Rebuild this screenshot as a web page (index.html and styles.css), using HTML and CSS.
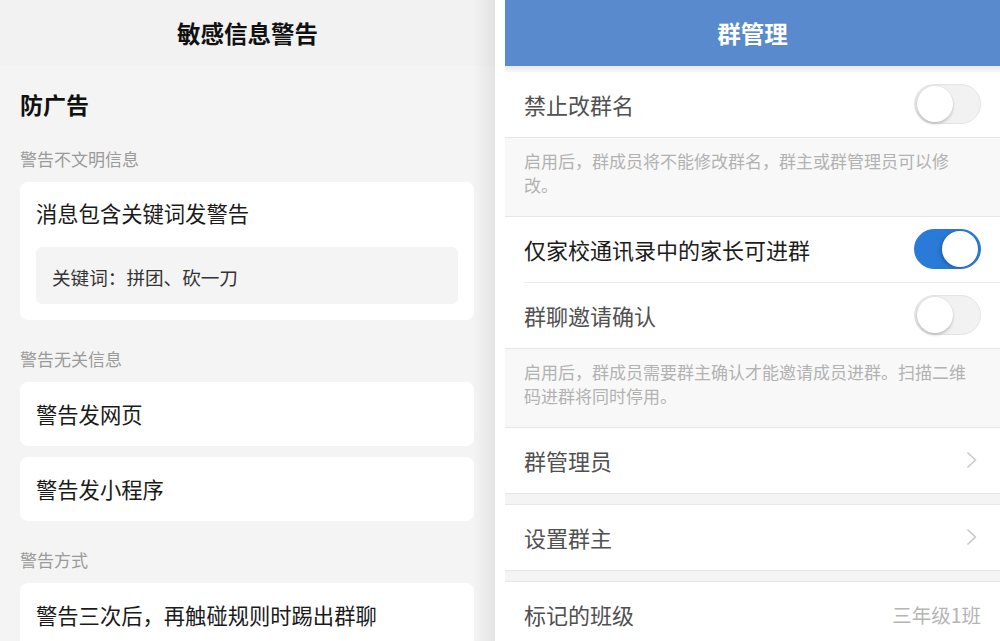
FILE: index.html
```html
<!DOCTYPE html>
<html lang="zh-CN">
<head>
<meta charset="utf-8">
<title>敏感信息警告 / 群管理</title>
<link rel="stylesheet" href="styles.css">
</head>
<body>
<div class="screen">
  <section class="left">
    <header class="l-head">敏感信息警告</header>
    <div class="l-body">
      <h2 class="l-title">防广告</h2>
      <div class="label">警告不文明信息</div>
      <div class="card card-kw">
        <div class="card-text">消息包含关键词发警告</div>
        <div class="kw">关键词：拼团、砍一刀</div>
      </div>
      <div class="label">警告无关信息</div>
      <div class="card">警告发网页</div>
      <div class="card">警告发小程序</div>
      <div class="label">警告方式</div>
      <div class="card">警告三次后，再触碰规则时踢出群聊</div>
    </div>
  </section>
  <div class="gap"></div>
  <section class="right">
    <header class="r-head">群管理</header>
    <div class="strip"></div>
    <div class="row">
      <span class="row-text">禁止改群名</span>
      <span class="toggle"><span class="knob"></span></span>
    </div>
    <div class="desc">启用后，群成员将不能修改群名，群主或群管理员可以修<br>改。</div>
    <div class="row inset">
      <span class="row-text strong">仅家校通讯录中的家长可进群</span>
      <span class="toggle on"><span class="knob"></span></span>
    </div>
    <div class="sep"></div>
    <div class="row">
      <span class="row-text">群聊邀请确认</span>
      <span class="toggle"><span class="knob"></span></span>
    </div>
    <div class="desc">启用后，群成员需要群主确认才能邀请成员进群。扫描二维码进群将同时停用。</div>
    <div class="row">
      <span class="row-text">群管理员</span>
      <svg class="chev" width="12" height="18" viewBox="0 0 12 18"><polyline points="2,2 9.5,9 2,16" fill="none" stroke="#c9c9c9" stroke-width="1.7" stroke-linecap="round" stroke-linejoin="round"/></svg>
    </div>
    <div class="spacer"></div>
    <div class="row">
      <span class="row-text">设置群主</span>
      <svg class="chev" width="12" height="18" viewBox="0 0 12 18"><polyline points="2,2 9.5,9 2,16" fill="none" stroke="#c9c9c9" stroke-width="1.7" stroke-linecap="round" stroke-linejoin="round"/></svg>
    </div>
    <div class="spacer"></div>
    <div class="row">
      <span class="row-text">标记的班级</span>
      <span class="value">三年级1班</span>
    </div>
  </section>
</div>
</body>
</html>
```
FILE: styles.css
```css
* { box-sizing: border-box; }
html, body { margin: 0; padding: 0; background: #fff; }
body {
  width: 1000px;
  height: 641px;
  overflow: hidden;
  font-family: "Noto Sans CJK SC", "Noto Sans", sans-serif;
}
.screen {
  display: flex;
  width: 1000px;
  height: 641px;
}
.left {
  width: 495px;
  flex: none;
  display: flex;
  flex-direction: column;
}
.l-head {
  height: 66px;
  line-height: 66px;
  text-align: center;
  font-size: 23.5px;
  font-weight: 700;
  color: #111;
  background: linear-gradient(to right, rgba(0,0,0,0) calc(100% - 22px), rgba(0,0,0,0.065) 100%), #f2f2f2;
}
.l-body {
  flex: 1;
  padding: 0 21px 0 20px;
  background: linear-gradient(to right, rgba(0,0,0,0) calc(100% - 22px), rgba(0,0,0,0.065) 100%), #f4f4f4;
}
.l-title {
  margin: 22px 0 0;
  font-size: 23px;
  line-height: 32px;
  font-weight: 700;
  color: #111;
}
.label {
  margin: 27px 0 11px;
  font-size: 17px;
  line-height: 24px;
  color: #9a9a9a;
}
.card {
  background: #fff;
  border-radius: 8px;
  height: 64px;
  line-height: 64px;
  padding: 0 16px;
  margin-bottom: 11px;
  font-size: 21.3px;
  color: #1a1a1a;
}
.card.card-kw {
  height: auto;
  line-height: normal;
  padding: 16px;
}
.card-text {
  font-size: 21.3px;
  line-height: 30px;
}
.kw {
  margin-top: 19px;
  height: 57px;
  line-height: 59px;
  padding: 0 16px;
  background: #f4f4f4;
  border-radius: 6px;
  font-size: 18.6px;
  color: #333;
}
.gap {
  width: 10px;
  flex: none;
  background: #fff;
}
.right {
  width: 495px;
  flex: none;
  background: #f5f5f5;
}
.r-head {
  height: 66px;
  line-height: 66px;
  text-align: center;
  background: #588acd;
  color: #fff;
  font-size: 23.5px;
  font-weight: 700;
}
.strip {
  height: 6px;
  background: linear-gradient(#e9e9e9, #f6f6f6);
}
.row {
  height: 66px;
  padding: 0 19px 1px;
  background: #fff;
  border-bottom: 1px solid #e6e6e6;
  display: flex;
  align-items: center;
  justify-content: space-between;
}
.row.inset { border-bottom: none; height: 65px; }
.sep {
  height: 1px;
  background: linear-gradient(to right, #fff 19px, #ececec 19px);
}
.row-text {
  font-size: 22px;
  color: #505050;
}
.row-text.strong { color: #1c1c1c; }
.toggle {
  width: 67px;
  height: 40px;
  border-radius: 20px;
  padding: 2px;
  display: flex;
  align-items: center;
  justify-content: flex-start;
  background: linear-gradient(to right, #e6e6e6, #f1f1f1 55%, #f2f2f2);
  border: 1px solid #e4e4e4;
}
.toggle.on {
  justify-content: flex-end;
  background: linear-gradient(to right, #2a7bd9, #2976d3);
  border-color: #2a78d6;
}
.knob {
  width: 36px;
  height: 36px;
  border-radius: 50%;
  background: #fff;
  box-shadow: 0 2px 3px rgba(0,0,0,0.18), 0 0 0 0.5px rgba(0,0,0,0.06);
}
.toggle.on .knob {
  box-shadow: -2px 1px 3px rgba(0,0,0,0.18);
}
.desc {
  height: 79px;
  padding: 11px 19px 0;
  background: #f8f8f8;
  border-bottom: 1px solid #e6e6e6;
  font-size: 17px;
  line-height: 24px;
  color: #b2b2b2;
}
.chev { margin-right: 3px; }
.spacer {
  height: 11px;
  background: #f4f4f4;
  border-bottom: 1px solid #e8e8e8;
}
.value {
  font-size: 19.5px;
  color: #b5b5b5;
}
```
